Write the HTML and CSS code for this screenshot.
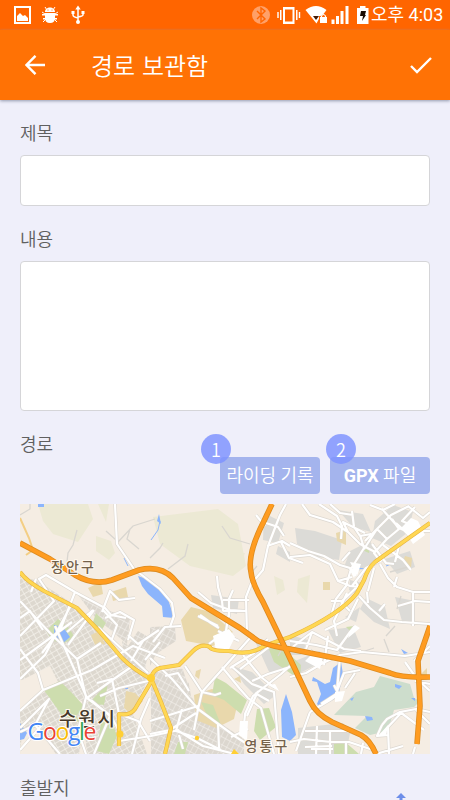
FILE: index.html
```html
<!DOCTYPE html>
<html lang="ko">
<head>
<meta charset="utf-8">
<title>경로 보관함</title>
<link rel="stylesheet" href="styles.css">
</head>
<body>
<div class="status">
  <svg class="status-icons" viewBox="0 0 90 30" fill="#fff">
    <path fill-rule="evenodd" d="M14 6h17v18H14zM16 8v14h13V8z"/><path d="M17 21v-5l3-3 3 3 2-1 3 3v3z"/>
    <path d="M45 12c0-6 10-6 10 0zM42 14h16v1.500H42zM43 18h14v1.500H43zM45 13h10v5q0 5-5 5t-5-5z"/>
    <path d="M45 7l2 3M55 7l-2 3M42 12l3 2M58 12l-3 2M43 22l3-3M57 22l-3-3" stroke="#fff"/>
    <circle cx="48" cy="10" r=".6" fill="#ff6500"/><circle cx="52" cy="10" r=".6" fill="#ff6500"/>
    <path d="M78 8v14M73 12v3q0 2 5 3M83 12v3q0 1-5 2" fill="none" stroke="#fff" stroke-width="1.500"/>
    <path d="M78 5.500l2.700 4h-5.400zM71.500 11h3v3h-3zM81.500 11h3v3h-3z"/><circle cx="78" cy="22" r="2"/>
  </svg>
  <svg class="status-icons right" viewBox="250 0 120 30" fill="#fff">
    <circle cx="261" cy="15" r="9" fill="#ffa068"/><path d="M257 11l8 8-4 3V8l4 3-8 8" fill="none" stroke="#ff6500" stroke-width="1.400"/>
    <path fill-rule="evenodd" d="M283 7h11.500v17H283zM285 9.500v12h7.500v-12z"/><path d="M280 10h1.500v10H280zM277.300 12h1.400v6h-1.400zM296 10h1.500v10H296zM298.800 12h1.400v6h-1.400z"/>
    <path d="M305.500 10q10.500-8 21 0l-3 4-3 2-4 7.500z"/><path d="M313 16h6l-3 4z" fill="#421b05"/>
    <path d="M319 16h8.500v7.500H319z" fill="#ff6500"/><path d="M320 17h7v6h-7z"/><path d="M321.500 17v-1q2-3 4 0v1" fill="none" stroke="#fff" stroke-width="1.200"/>
    <path d="M331.500 19.500h3V24h-3zM336 16h3v8h-3zM340.500 11h3v13h-3zM345.500 6h3v18h-3z"/>
    <path d="M357 8h3V6h5.500v2h3v16H357z"/><path d="M361 11h5l-1 4h1l-4 6 1-5h-3z" fill="#180b03"/>
  </svg>
  <span class="clock">오후 4:03</span>
</div>
<header class="bar">
  <svg class="back" viewBox="0 0 20 20"><path d="M10.500 .8L1.500 10l9 9.200M1.500 10H20"/></svg>
  <h1>경로 보관함</h1>
  <svg class="check" viewBox="0 0 22 17"><path d="M1 9l6 6L21 1"/></svg>
</header>
<main class="form">
  <label class="label" for="title">제목</label>
  <input class="field" id="title">
  <label class="label label-body" for="body">내용</label>
  <textarea class="field area" id="body"></textarea>
  <div class="route">
    <span class="label">경로</span>
    <div class="buttons">
      <button class="button">라이딩 기록<i class="badge">1</i></button>
      <button class="button"><b>GPX</b> 파일<i class="badge">2</i></button>
    </div>
  </div>
  <svg class="map" viewBox="20 503 410 250">
    <defs>
      <pattern id="grid" width="6" height="5" patternUnits="userSpaceOnUse" patternTransform="rotate(-30)"><rect width="6" height="5" fill="#ddd8cf"/><path d="M0 0H6M0 0V5" stroke="#f5f2ec" stroke-width="1.400"/></pattern>
      <pattern id="grid2" width="7" height="5" patternUnits="userSpaceOnUse" patternTransform="rotate(-62)"><rect width="7" height="5" fill="#dcd7cf"/><path d="M0 0H7M0 0V5" stroke="#f5f2ed" stroke-width="1.200"/></pattern>
      <g id="streets">
        <path d="M20 600L50 632 77 658 86 696 78 730 86 753M20 678L45 654 72 602M20 635L54 600 39 578 46 574 75 591 105 607 111 614 126 617M20 659L72 621M36 578L31 591M75 591L61 627 42 652M94 609L68 644M20 617L30 610 43 629M20 710L43 689 92 669 133 645 165 657M43 689L38 672 20 648M55 625L87 697 111 680 134 664M77 658L101 642M67 631L93 609M87 697L111 715 119 730M98 626L148 672M97 682L112 678 119 713M102 611L110 590 119 599 135 597M103 609L117 624 112 638M105 617L120 611 134 619 128 639M128 634L138 643 159 629M143 640L131 660M20 727L49 698 35 724 20 731M35 724L60 753M20 749L42 724M94 753L110 715 91 699M100 695L119 687 148 680M119 740L151 735 179 729M132 753L141 718 150 697M119 713L138 720 150 740"/>
        <path d="M150 657L172 678 198 708 236 736 247 743M150 720L198 705M160 641L145 659M153 641L165 626 181 625M198 708L202 691 227 663 250 637M202 691L215 694 221 692M185 665L202 691M222 666L240 688 248 697 261 707 274 753M165 675L178 672 189 690M182 708L176 730 197 737 221 749M198 708L194 729M218 722L219 747M150 733L170 729 196 712M177 729L203 745 235 753M179 734L183 748M243 736L245 713 253 695 281 673 290 665M231 665L252 683 274 691 279 753M243 654L261 676 275 687M240 668L261 652 278 639M255 692L269 700M248 728L231 736M268 638L254 652 230 667M252 680L268 673 290 666M258 690L247 715"/>
        <path d="M115 503L117 543 134 568 160 588 172 602 174 615 170 626M217 575L218 586 222 600 223 610M198 591L211 602 230 609 247 610M233 589L229 598 229 616M223 610L247 610M223 599L249 599M198 615L218 625M247 634L246 596 251 583 263 569 268 545 280 514 286 503M267 545L282 540 290 545M263 521L278 526 284 535M281 541L289 557 303 562M256 514L265 525M229 611L226 630 209 643M218 630L239 640M200 614L211 622 219 627"/>
        <path d="M302 503L310 514 333 521 348 531 360 543 375 551M319 503L337 515 342 525 341 538M330 503L340 512 353 514M352 510L354 526 360 535 371 533M348 531L343 521 365 532M360 534L364 547 351 568 346 585 336 598 331 615M370 504L383 509 395 503M382 508L399 527 415 534M364 548L377 528 391 514 409 505M377 528L387 538 399 528 392 518M377 528L365 540M387 538L374 552 381 561M396 522L409 534M408 505L423 517 430 511M415 506L402 520 425 530M372 543L386 562 394 563M383 544L403 559 411 569M430 530L416 530 399 545 395 561M352 585L366 567 382 559M290 542L308 550 324 555 340 564 350 567 356 575M290 556L310 554 330 563 338 580 350 585 361 586M358 585L342 600 331 600M338 580L352 576M350 551L342 560M361 590L355 580M380 563L388 577 397 586 413 591 430 591M368 590L374 567M397 576L394 586M413 592V625M430 601L415 600 398 605M359 595L370 607 384 619 402 621 430 623M358 598L348 618 325 629M368 602L367 591M379 610L385 603M347 592L334 620 337 635M350 610L341 601"/>
        <path d="M290 648L312 631 344 648 361 650M312 631L306 648M328 635L324 664M290 640L316 644 337 649 350 631 355 625M310 649L323 662 306 672 290 676M323 662L340 654 362 651 405 655 430 651M340 655L337 690 344 672 360 669M310 711L330 699 340 692M310 711L296 750M290 741L304 738 331 741 349 741 376 750M305 730L347 730 366 736M317 725L316 753M330 730L330 753M305 746L332 745M311 748H333M363 742L361 753M382 724L387 718 400 711 416 708 430 711M430 683L415 680M430 690L417 678 405 661M416 709L430 723M389 753L388 726 402 711M382 724L377 735 389 734M400 711L424 729M415 746L413 753M346 753V742M376 753L403 745M321 703L338 692 334 684M355 672L345 687M414 660L430 645"/>
      </g>
      <path id="roadA" d="M20 542L50 558 75 574Q94 585 112 579L139 569Q160 564 173 577L191 597 240 627 258 640Q273 646 290 648L350 660 390 672Q402 677 430 676"/>
      <path id="roadB" d="M272 503L264 520Q247 553 251 571 252 582 263 601L277 630 310 700Q316 713 332 721L361 734Q370 739 376 753"/>
      <path id="roadC" d="M430 625L418 660 420 705 417 743"/>
      <path id="yellow" d="M430 522L396 546 375 561Q368 567 364 579L357 592Q341 613 290 636L264 645Q250 655 229 650 210 650 210 646 201 642 193 650L179 664 160 667Q153 669 151 677L161 701 171 727 165 753M20 571Q26 580 44 590L77 607 99 630 122 657Q134 669 151 678M151 681L135 708Q130 715 119 713V745"/>
    </defs>
    <rect x="20" y="503" width="410" height="250" fill="#f5ede3"/>
    <g fill="#ece9d4"><path d="M38 503h50l5 15-15 23-25-8-10-13zM153 516l65-8 20 15 8 42-13 10-43-10-30-22zM96 535l15 5 4 12-6 7-13-9zM200 547l45 5-5 15-30-3zM274 575l9 4 2 10-8 5zM298 578l12-4-3 28-10-11zM98 503h11l-3 18z"/></g>
    <path fill="url(#grid)" d="M20 575L38 580 79 607 107 642 150 676 132 710 147 753H87L82 700 20 678zM20 710l25-20 42 25-8 38H20z"/>
    <path fill="url(#grid2)" d="M150 626l25-1 1 15-20 13-6 12zM138 630l17 10-10 20-17-15zM151 672l35-5 5 28 8 13 45 30v15h-93zM75 590l30 18 25 10-3 25-33-28zM122 640l25 18-3 16-20-15z"/>
    <g fill="#dcdbd7"><path d="M295 527l20 3 27 9-3 20-22-3-20-13zM338 509l25 4 8 18-18-5zM264 512l20 10-6 20-15-3zM278 545l12 6v10l-14-8zM211 594l28 4-2 15-24-6zM375 520l18-16 20 7-5 20-17 14-19-8zM350 550l20-10 10 20-26 12-10-6zM385 558l25-8 5 16-18 7zM366 597l19 9 5 22-16-7-14-13zM350 579l12 3-4 12-9-5zM395 596l20 4v25l-13-5zM290 634l18 5-7 15h-11zM295 660l25-10-2 13-20 10zM298 727l45-5 7 10-4 21h-48zM328 629l25-3 8 20-21 6zM232 665l20 6 24 23-12 9-20-20zM255 640l35 5 2 18-22 10zM345 616l15-10-4 15z"/></g>
    <g fill="#f5ede3"><path d="M20 680l30-15 9 18-39 17zM22 733l14-7 20 27H20zM180 660l38-12 21 13-36 28-16-8z"/></g>
    <g fill="#e9d8ac"><path d="M181 619l10-13 20 5 22 20-20 14-27-5zM194 694l18-6 27 8-5 22-18 9-20-8zM126 690l9 2 8 8-12 13-7-6zM88 587l13-6 2 12-10 3zM111 591l15-5 2 10-15 4zM91 634l8-4 6 13-10 1zM336 532l10-3v15l-9-4zM323 581h7v8h-7zM405 555l7 2-1 10-8-6zM30 581l7 3-4 5zM196 670l5-2-2 10-4-3zM234 678l6-3 1 7zM427 667v9l-8-1z"/></g>
    <g fill="#cdddae"><path d="M43 688l17-8 11 11 14 15-9 9 5 7-19-8zM46 630l12-12 11 9 6 10-11 5-11-2zM215 676l11 6 21 17-6 14-17-14-12-5zM257 708l12-1 7 19-16 13-6-9zM268 646l19 5 14 13-1 15-26-18zM110 715l7 20-8 18-12-3 4-29zM334 743l10-3 15 13h-25zM89 702l19-20-4 22zM201 701l12 3 8 20-15-12zM178 741h10l-3 12h-11zM362 549l8-3-1 6zM96 612l10 10-6 10-8-8zM346 626l8-1-4 5z"/></g>
    <path fill="#cdddcc" d="M380 675L410 683 414 697 420 700 414 706 394 709 388 730 370 734 355 727 367 715 334 714 356 691 374 686z"/>
    <g fill="#8cb5fc"><path d="M138 575l12 4 10 9 8 10 6 19-11-1-1-11-14-12-6-8zM159 513l2 10-4-3zM38 503h6v3h-6zM341 661l2 12-5 23-18 10-3-3 4-10-4-12-5-1 1-4 12 7 5-2 3-14zM286 693l6 18 4 23-6 6-8-4-1-27zM54 624l9 2 7 10-8 7-8-7zM20 722l7 10-3 6-4 1zM395 683l7 2-3 3-4-2zM365 715l7 1 1 3-6 1zM350 698l4-2-2 4zM401 648l7 4-4 1zM411 697h4v3zM125 685h3v3h-3z"/></g>
    <path d="M151 539l7-10 2-9M124 557l4 8M356 567l10 1M386 565l8-3" fill="none" stroke="#8cb5fc"/>
    <path class="lane" d="M30 503v5l-10 6M77 529l-4 15-5 8-1 9M118 541l15-16 22-7M130 528l-3 10 12 10M150 557l10-10 3-5M188 543l-3 12-17 13M222 525l8 12 20 6M106 530l10 9M257 565l-7 8M384 638l5 13M390 571l18-5M401 595l-4 13M286 641l-8 14M362 651l12-4M395 625l-9 10"/>
    <use href="#streets" class="street-edge"/><use href="#streets" class="street"/>
    <g fill="#fff"><path d="M213 635l16-7 6 8-7 14-12-1zM401 527l10-10 7 3 7 14-12 9-5-8zM350 561l11 2-4 12zM348 566l10 3-4 8zM240 720h8l-1 20-8-6zM305 660l10-10 8 5-3 13zM388 724l-2 11h-8zM268 684l7-1 4 7zM350 630l5-6 5 3-12 10zM335 691l10-1-3 10-7 1z"/></g>
    <use href="#yellow" class="yellow-edge"/><use href="#yellow" class="yellow"/>
    <path d="M20 517l9 20 4 12-7 5" fill="none" stroke="#f3ce84" stroke-width="2"/>
    <g fill="#ffcf35"><circle cx="151" cy="677" r="4"/><circle cx="120" cy="733" r="3.500"/><circle cx="197" cy="737" r="2.200"/><path d="M231 753l3-5 5 5z"/></g>
    <g class="highway-edge"><use href="#roadC"/><use href="#roadB"/><use href="#roadA"/></g>
    <g class="highway"><use href="#roadC"/><use href="#roadB"/><use href="#roadA"/></g>
    <text class="place" x="51" y="571" textLength="43">장안구</text>
    <text class="place city" x="59" y="725" textLength="56">수원시</text>
    <text class="place" x="244.500" y="749.500" textLength="43">영통구</text>
    <text class="google" x="27.500" y="739" textLength="69"><tspan fill="#4285f4">G</tspan><tspan fill="#ea4335">o</tspan><tspan fill="#fbbc05">o</tspan><tspan fill="#4285f4">g</tspan><tspan fill="#34a853">l</tspan><tspan fill="#ea4335">e</tspan></text>
  </svg>
  <div class="start"><span class="label">출발지</span><svg class="arrow" viewBox="0 0 10 8"><path d="M5 0l5 5H6.500v3h-3V5H0z"/></svg></div>
</main>
</body>
</html>
```
FILE: styles.css
```css
* { box-sizing: border-box; }
body { margin: 0; width: 450px; height: 800px; overflow: hidden; background: #efeffa; color: #606060; font-family: "Noto Sans CJK KR", sans-serif; display: flex; flex-direction: column; }
.status { height: 30px; flex: none; display: flex; align-items: center; background: #ff6500; color: #fff; }
.status-icons { width: 90px; height: 30px; }
.status-icons.right { width: 120px; margin-left: 160px; }
.clock { font: 300 18px/30px Roboto, "Noto Sans CJK KR", sans-serif; white-space: nowrap; margin-left: 1px; font-weight: 400; }
.bar { height: 70px; flex: none; display: flex; align-items: center; background: #ff7205; color: #fff; box-shadow: 0 1px 3px #9298ae; }
.bar svg { fill: none; stroke: #fff; stroke-width: 2.4; }
.back { width: 20px; height: 20px; margin-left: 25px; margin-top: -1px; }
.bar h1 { margin: 0 0 0 46px; font-size: 24px; line-height: 36px; font-weight: 350; white-space: nowrap; }
.check { width: 22px; height: 17px; margin-left: auto; margin-right: 18px; }
.form { display: flex; flex-direction: column; padding: 18px 20px 0; }
.label { font-size: 18px; line-height: 28px; font-weight: 350; }
.label-body { margin-top: 18px; }
.field { width: 410px; height: 51px; margin-top: 9px; border: 1px solid #d5d5d8; border-radius: 4px; background: #fff; outline: 0; resize: none; }
.area { height: 150px; }
.route { height: 82px; margin-top: 18px; display: flex; justify-content: space-between; }
.buttons { display: flex; gap: 10px; margin-top: 28px; }
.button { position: relative; width: 100px; height: 37px; padding: 0; border: 0; border-radius: 4px; background: #a4b4ed; color: #fff; font: 350 18px/37px Roboto, "Noto Sans CJK KR", sans-serif; white-space: nowrap; }
.button b { font-weight: 700; }
.badge { position: absolute; left: -19px; top: -23px; width: 30px; height: 30px; border-radius: 50%; background: rgba(125, 145, 255, .82); font: normal 350 18px/30px "Noto Sans CJK KR", sans-serif; }
.button:last-child .badge { left: -4px; }
.map { width: 410px; height: 250px; display: block; margin-top: -7px; }
.map use { fill: none; stroke-linejoin: round; }
.lane { fill: none; stroke: #d9d6d0; stroke-width: 1.3; }
.street-edge { stroke: #ddd8d1; stroke-width: 3.4; }
.street { stroke: #fff; stroke-width: 2.2; }
.yellow-edge { stroke: #e7b443; stroke-width: 4.2; }
.yellow { stroke: #ffd752; stroke-width: 3; }
.highway-edge { stroke: #dc8b20; stroke-width: 5.6; }
.highway { stroke: #ff9c20; stroke-width: 4; }
.place { font: 500 14px "Noto Sans CJK KR", sans-serif; fill: #74624c; stroke: #fff9ef; stroke-width: 2px; paint-order: stroke; }
.city { font-size: 19px; fill: #46392a; }
.google { font: 500 23px "Open Sans", sans-serif; stroke: #fff; stroke-width: 2px; paint-order: stroke; }
.start { display: flex; justify-content: space-between; align-items: flex-end; height: 28px; margin-top: 19px; }
.arrow { width: 10px; height: 8px; margin: 0 24px 0 0; fill: #6d8ee9; }
```
